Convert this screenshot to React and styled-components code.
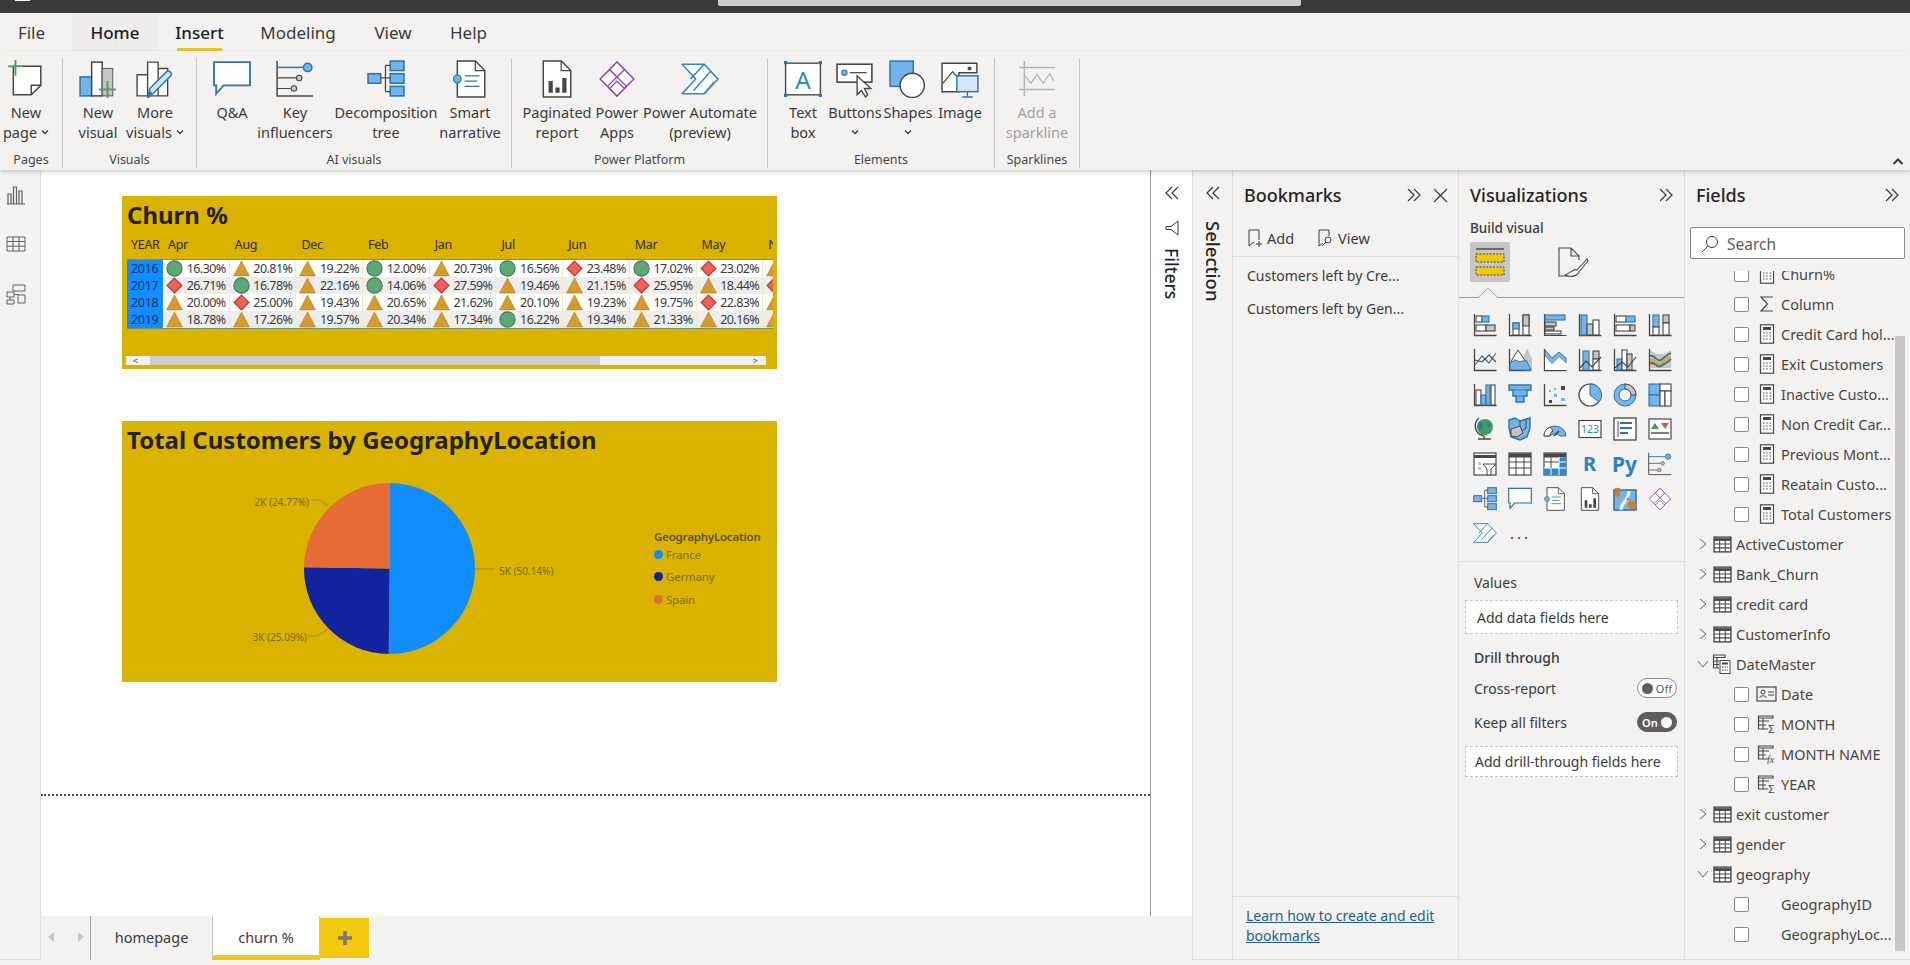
import React from 'react'
import styled, { createGlobalStyle } from 'styled-components'

const D = '#484644'
const L = '#2e75a8'
const F = '#74b4ea'
const G = '#c8c6c4'
const P = '#8e44a8'
const UI = '"Noto Sans", "Open Sans", sans-serif'

const Global = createGlobalStyle`
  html, body { margin: 0; padding: 0; background: #f3f2f1; overflow: hidden; }
  body { font-family: ${UI}; color: #252423; }
  * { box-sizing: border-box; }
`

const Shell = styled.div`
  width: 1910px;
  height: 965px;
  display: flex;
  flex-direction: column;
  overflow: hidden;
`
const TitleBar = styled.div`
  height: 13px;
  flex: none;
  background: #3b3a39;
  display: flex;
  align-items: flex-start;
`
const AppMark = styled.div`
  width: 15px;
  height: 1px;
  margin-left: 15px;
  background: #fff;
`
const TitleSearch = styled.div`
  width: 583px;
  height: 6px;
  margin-left: 688px;
  background: #cfcdcb;
  border-radius: 0 0 2px 2px;
`
const TabStrip = styled.div`
  height: 38px;
  flex: none;
  display: flex;
  background: #f3f2f1;
  font-size: 17px;
`
const MenuTab = styled.div`
  margin-left: ${(p) => p.$left}px;
  width: ${(p) => p.$width}px;
  height: 38px;
  display: flex;
  justify-content: center;
  padding-top: 8px;
  position: relative;
  line-height: 24px;
  color: ${(p) => (p.$strong ? '#201f1e' : '#3b3a39')};
  background: ${(p) => (p.$hl ? '#eeedeb' : 'transparent')};
  font-weight: ${(p) => (p.$strong ? 500 : 400)};
  &::after {
    content: '';
    display: ${(p) => (p.$line ? 'block' : 'none')};
    position: absolute;
    left: 0;
    right: 0;
    bottom: 0;
    height: 3px;
    background: #e9c229;
  }
`
const Ribbon = styled.div`
  height: 119px;
  flex: none;
  display: flex;
  padding-top: 7px;
  background: #f3f2f1;
  box-shadow: 0 2px 4px rgba(0, 0, 0, 0.18);
  position: relative;
  z-index: 3;
`
const Group = styled.div`
  width: ${(p) => p.$width}px;
  height: 110px;
  flex: none;
  border-right: 1px solid ${G};
  display: flex;
  flex-direction: column;
  padding-left: ${(p) => p.$pad || 0}px;
`
const GroupItems = styled.div`
  display: flex;
  height: 97px;
  padding-top: 2px;
`
const GroupLabel = styled.div`
  margin-left: ${(p) => -(p.$pad || 0)}px;
  text-align: center;
  font-size: 12.5px;
  line-height: 16px;
  color: #484644;
`
const Item = styled.div`
  width: ${(p) => p.$width}px;
  flex: none;
  display: flex;
  flex-direction: column;
  align-items: center;
  color: ${(p) => (p.$off ? '#a19f9d' : '#3b3a39')};
  font-size: 14.5px;
  line-height: 20px;
  text-align: center;
  white-space: nowrap;
`
const ItemIcon = styled.div`
  height: 38px;
  margin-bottom: 4px;
  display: flex;
  align-items: center;
`
const ItemLine = styled.div`
  display: flex;
  align-items: center;
  justify-content: center;
  gap: 4px;
  height: 20px;
`
const Collapse = styled.div`
  position: absolute;
  right: 6px;
  bottom: 2px;
`
const Main = styled.div`
  flex: 1;
  display: flex;
  min-height: 0;
  border-bottom: 1px solid #e1dfdd;
`
const StatusStrip = styled.div`
  height: 5px;
  flex: none;
  background: #f3f2f1;
`
const Rail = styled.div`
  width: 41px;
  flex: none;
  border-right: 1px solid #e1dfdd;
  background: #f3f2f1;
  display: flex;
  flex-direction: column;
  align-items: center;
  padding: 15px 8px 0 0;
  gap: 29px;
`
const Center = styled.div`
  width: 1151px;
  flex: none;
  display: flex;
  flex-direction: column;
`
const CanvasRow = styled.div`
  height: 746px;
  flex: none;
  display: flex;
  background: #fff;
`
const Canvas = styled.div`
  width: 1110px;
  flex: none;
  border-right: 1px solid #a19f9d;
`
const ReportPage = styled.div`
  height: 626px;
  padding: 26px 0 0 81px;
  border-bottom: 2px dotted #484644;
`
const ChurnCard = styled.div`
  width: 655px;
  height: 173px;
  background: #d9b300;
  padding: 0 0 0 5px;
  overflow: hidden;
`
const CardTitle = styled.div`
  font-family: ${UI};
  font-weight: 700;
  font-size: 24px;
  line-height: 38px;
  height: 40px;
  color: #252010;
  white-space: nowrap;
`
const ChurnTitle = styled(CardTitle)`
  height: 37px;
`
const HeadRow = styled.div`
  display: flex;
  height: 22px;
  margin-bottom: 4px;
  align-items: center;
  font-size: 12.5px;
  letter-spacing: -0.3px;
  color: #33290a;
  overflow: hidden;
  width: 646px;
`
const HeadCell = styled.div`
  flex: none;
  width: ${(p) => p.$width}px;
  padding-left: ${(p) => p.$pad}px;
`
const Grid = styled.div`
  width: 646px;
  height: 70px;
  overflow: hidden;
  border-top: 1px solid #6f9470;
  border-bottom: 1px solid #6f9470;
  background: #fff;
`
const GridRow = styled.div`
  display: flex;
  height: 17px;
  background: ${(p) => (p.$alt ? '#eeeded' : '#fff')};
`
const YearCell = styled.div`
  width: 36px;
  flex: none;
  background: #118dff;
  color: #12365c;
  font-size: 12.5px;
  letter-spacing: -0.3px;
  line-height: 17px;
  padding-left: 4px;
`
const ValCell = styled.div`
  width: 66.7px;
  flex: none;
  display: flex;
  align-items: center;
  justify-content: space-between;
  padding: 0 3px 0 3px;
  border-right: 1px solid #f3e9bd;
  font-size: 12.5px;
  letter-spacing: -0.55px;
  color: #3b3a39;
`
const HBar = styled.div`
  width: 640px;
  height: 9px;
  margin: 27px 0 0 -1px;
  background: #f1f1f1;
  display: flex;
  align-items: center;
  font-size: 9px;
  line-height: 9px;
  color: #444;
`
const HArrow = styled.div`
  width: 24px;
  flex: none;
  padding-left: 7px;
`
const HThumb = styled.div`
  width: 450px;
  flex: none;
  height: 9px;
  background: #cdcdcd;
`
const HEnd = styled.div`
  margin-left: auto;
  padding-right: 8px;
`
const PieCard = styled.div`
  width: 655px;
  height: 261px;
  margin-top: 52px;
  background: #d9b300;
`
const PieTitle = styled(CardTitle)`
  padding-left: 5px;
`
const PieBody = styled.div`
  display: flex;
  height: 221px;
`
const Legend = styled.div`
  padding-top: 68px;
  font-size: 11.5px;
  letter-spacing: -0.2px;
  color: #7d6c14;
  display: flex;
  flex-direction: column;
`
const LegendTitle = styled.div`
  font-weight: 600;
  color: #5c5120;
  line-height: 16px;
  margin-bottom: -2px;
`
const LegendRow = styled.div`
  display: flex;
  align-items: center;
  gap: 3px;
  height: 22.5px;
`
const Dot = styled.span`
  width: 9px;
  height: 9px;
  border-radius: 50%;
  background: ${(p) => p.$c};
`
const SidePane = styled.div`
  width: ${(p) => p.$width}px;
  flex: none;
  display: flex;
  flex-direction: column;
  align-items: center;
  padding-top: 15px;
  background: ${(p) => (p.$white ? '#fff' : '#f3f2f1')};
  border-left: ${(p) => (p.$white ? 'none' : '1px solid #e1dfdd')};
`
const VText = styled.div`
  writing-mode: vertical-rl;
  font-size: ${(p) => p.$size}px;
  font-weight: 500;
  color: #252423;
  margin-top: ${(p) => p.$top}px;
  line-height: 22px;
`
const Funnel = styled.div`
  margin-top: 19px;
`
const SheetBar = styled.div`
  height: 44px;
  flex: none;
  display: flex;
  background: #f3f2f1;
`
const SheetNav = styled.div`
  width: 50px;
  flex: none;
  border-right: 1px solid #a19f9d;
  display: flex;
  align-items: center;
  justify-content: center;
  gap: 20px;
  padding-bottom: 2px;
`
const SheetTab = styled.div`
  width: ${(p) => p.$width}px;
  flex: none;
  height: 44px;
  display: flex;
  align-items: center;
  justify-content: center;
  font-size: 14.5px;
  padding-top: ${(p) => (p.$on ? 3 : 0)}px;
  padding-bottom: ${(p) => (p.$on ? 0 : 2)}px;
  color: #3b3a39;
  background: ${(p) => (p.$on ? '#fff' : 'transparent')};
  border-right: 1px solid #c8c6c4;
  border-bottom: ${(p) => (p.$on ? '5px solid #f2c811' : 'none')};
`
const AddSheet = styled.div`
  width: 49px;
  height: 40px;
  margin-top: 2px;
  background: #f2c811;
  display: flex;
  align-items: center;
  justify-content: center;
`
const Pane = styled.div`
  width: 226px;
  flex: none;
  border-left: 1px solid #e1dfdd;
  background: #f3f2f1;
  display: flex;
  flex-direction: column;
  position: relative;
`
const PaneHead = styled.div`
  height: 50px;
  flex: none;
  display: flex;
  align-items: center;
  padding: 0 10px 0 11px;
  font-size: 18px;
  font-weight: 500;
  color: #252423;
  gap: 11px;
`
const HeadTitle = styled.div`
  margin-right: auto;
`
const BookActions = styled.div`
  height: 37px;
  flex: none;
  display: flex;
  align-items: center;
  padding: 0 0 0 12px;
  font-size: 14.5px;
  color: #3b3a39;
  border-bottom: 1px solid #e1dfdd;
`
const BookAction = styled.div`
  display: flex;
  align-items: center;
  gap: 4px;
  margin-right: 22px;
`
const BookList = styled.div`
  flex: 1;
  padding: 2px 0 0 14px;
  font-size: 14px;
  color: #3b3a39;
`
const BookItem = styled.div`
  height: 33px;
  line-height: 33px;
`
const BookFoot = styled.div`
  height: 63px;
  flex: none;
  border-top: 1px solid #e1dfdd;
  padding: 9px 0 0 13px;
  font-size: 14px;
  line-height: 20px;
  color: #1f5d94;
  text-decoration: underline;
`
const BuildLabel = styled.div`
  margin-left: 11px;
  height: 16px;
  line-height: 16px;
  font-size: 13.5px;
  font-weight: 500;
  color: #3b3a39;
`
const BuildTabs = styled.div`
  display: flex;
  margin: 6px 0 15px 11px;
  height: 40px;
  align-items: center;
`
const ActiveTab = styled.div`
  width: 40px;
  height: 40px;
  background: #c8c6c4;
  border-radius: 2px;
  display: flex;
  align-items: center;
  justify-content: center;
`
const FormatTab = styled.div`
  margin-left: 47px;
`
const NotchLine = styled.div`
  height: 1px;
  flex: none;
  background: #a19f9d;
  position: relative;
`
const Notch = styled.svg`
  position: absolute;
  left: 19px;
  top: -9px;
`
const IconGrid = styled.div`
  display: grid;
  grid-template-columns: repeat(6, 35px);
  grid-auto-rows: 34.7px;
  place-items: center;
  padding: 10px 0 0 8px;
  height: 264px;
  flex: none;
  color: ${L};
  border-bottom: 1px solid #e1dfdd;
`
const Glyph = styled.div`
  font-weight: 700;
  font-size: ${(p) => p.$size}px;
  line-height: 24px;
  color: #2e83bd;
`
const More = styled.div`
  font-size: 15px;
  letter-spacing: 3px;
  line-height: 14px;
  color: #3b3a39;
  margin-left: 2px;
`
const Caption = styled.div`
  margin: ${(p) => p.$top}px 0 0 15px;
  height: 20px;
  line-height: 20px;
  font-size: 14px;
  font-weight: ${(p) => (p.$bold ? 500 : 400)};
  color: #3b3a39;
`
const Drop = styled.div`
  margin: ${(p) => p.$top}px 0 0 6px;
  width: 213px;
  height: ${(p) => p.$h}px;
  padding-left: ${(p) => p.$pad}px;
  background: #fff;
  border: 1px dashed #c8c6c4;
  font-size: 14px;
  display: flex;
  align-items: center;
  color: #3b3a39;
  white-space: nowrap;
`
const ToggleRow = styled.div`
  margin: ${(p) => p.$top}px 7px 0 15px;
  height: 20px;
  display: flex;
  align-items: center;
  justify-content: space-between;
  font-size: 14px;
  color: #3b3a39;
`
const Toggle = styled.div`
  width: 40px;
  height: 20px;
  border-radius: 10px;
  border: 1px solid ${(p) => (p.$on ? '#605e5c' : '#8a8886')};
  background: ${(p) => (p.$on ? '#605e5c' : '#fff')};
  color: ${(p) => (p.$on ? '#fff' : '#605e5c')};
  display: flex;
  flex-direction: ${(p) => (p.$on ? 'row' : 'row-reverse')};
  align-items: center;
  justify-content: space-between;
  padding: 0 4px;
  font-size: 11px;
  font-weight: ${(p) => (p.$on ? 600 : 400)};
`
const Knob = styled.span`
  width: 11px;
  height: 11px;
  border-radius: 50%;
  background: ${(p) => (p.$on ? '#fff' : '#605e5c')};
`
const FieldSearch = styled.div`
  margin: 7px 0 0 5px;
  width: 215px;
  height: 32px;
  flex: none;
  background: #fff;
  border: 1px solid #8a8886;
  border-radius: 2px;
  display: flex;
  align-items: center;
  gap: 8px;
  padding: 2px 0 0 10px;
  font-size: 15.5px;
  color: #605e5c;
`
const FieldScroll = styled.div`
  margin-top: 12px;
  height: 689px;
  flex: none;
  overflow: hidden;
  position: relative;
`
const FieldInner = styled.div`
  margin-top: -12px;
`
const FieldRow = styled.div`
  height: 30px;
  display: flex;
  align-items: center;
  padding-left: ${(p) => (p.$table ? 13 : 49)}px;
  font-size: 14.5px;
  color: #484644;
  white-space: nowrap;
`
const Check = styled.span`
  width: 15px;
  height: 15px;
  flex: none;
  background: #fff;
  border: 1px solid #8a8886;
  border-radius: 2px;
`
const FieldIcon = styled.span`
  width: 23px;
  margin-left: ${(p) => p.$left}px;
  flex: none;
  display: flex;
  justify-content: center;
`
const FieldName = styled.span`
  margin-left: ${(p) => p.$left}px;
`
const VBar = styled.div`
  position: absolute;
  right: 5px;
  top: 65px;
  width: 10px;
  height: 615px;
  background: #c8c6c4;
`

const Svg = ({ size = 24, box = 24, children }) => (
  <svg width={size} height={size} viewBox={`0 0 ${box} ${box}`} fill="none" style={{ display: 'block', flex: 'none' }}>
    {children}
  </svg>
)
const Rects = ({ items }) =>
  items.map(([x, y, w, h, f = '#fff', s = D], i) => (
    <rect key={i} x={x} y={y} width={w} height={h} fill={f} stroke={s} strokeWidth="1.1" />
  ))
const Axis = () => <path d="M1.5 1V22.5H23.5" stroke={D} strokeWidth="1.3" />

const Chev = ({ left, size = 16 }) => (
  <Svg size={size} box={16}>
    <path d={left ? 'M8 2L2 8l6 6M14 2L8 8l6 6' : 'M2 2l6 6-6 6M8 2l6 6-6 6'} stroke="#3b3a39" strokeWidth="1.2" />
  </Svg>
)
const Caret = () => (
  <Svg size={8} box={8}>
    <path d="M1 2.5L4 5.5L7 2.5" stroke="#3b3a39" strokeWidth="1.3" />
  </Svg>
)

// ribbon icons, drawn on a 36 box
const NewPageIcon = () => (
  <Svg size={38} box={36}>
    <path d="M6 6H32V24L23 33H6Z" fill="#fff" stroke={D} strokeWidth="1.4" />
    <path d="M32 24H23V33" stroke={D} strokeWidth="1.4" />
    <path d="M8 0V15M1 6H15" stroke="#4c9c68" strokeWidth="1.8" />
  </Svg>
)
const NewVisualIcon = () => (
  <Svg size={38} box={36}>
    <rect x="1" y="16" width="11" height="18" fill={F} stroke={L} strokeWidth="1.4" />
    <rect x="12" y="2" width="10" height="32" fill="#fff" stroke={D} strokeWidth="1.4" />
    <rect x="22" y="8" width="10" height="26" fill={G} stroke={D} strokeWidth="0.8" />
    <path d="M27 20V37M19 28H35" stroke="#4c9c68" strokeWidth="1.8" />
  </Svg>
)
const MoreVisualsIcon = () => (
  <Svg size={38} box={36}>
    <path d="M1 14H11V34H1ZM11 2H21V34H11ZM21 8H30V34H21Z" fill="#fff" stroke={D} strokeWidth="1.3" />
    <path d="M11 36L13 27L29 11C31 9 35 13 33 15L17 31Z" fill="#cfe4f6" stroke={L} strokeWidth="1.4" />
    <path d="M11 36L13 29L16 32Z" fill={L} />
  </Svg>
)
const QaIcon = ({ size = 38 }) => (
  <Svg size={size} box={36}>
    <path d="M1 2H35V24H10L3 32V24H1Z" fill="#fff" stroke={L} strokeWidth="1.8" />
  </Svg>
)
const KeyIcon = ({ size = 38 }) => (
  <Svg size={size} box={36}>
    <path d="M1 1V34H35" stroke={D} strokeWidth="1.4" />
    <path d="M1 7H26" stroke={L} strokeWidth="1.4" />
    <circle cx="30" cy="7" r="4" fill={F} stroke={L} strokeWidth="1.4" />
    <path d="M1 17H19M1 27H14" stroke={D} strokeWidth="1.1" />
    <circle cx="22" cy="17" r="2.6" fill={G} stroke={D} />
    <circle cx="17" cy="27" r="2.6" fill={G} stroke={D} />
  </Svg>
)
const DecompIcon = ({ size = 38 }) => (
  <Svg size={size} box={36}>
    <rect x="1" y="13" width="12" height="9" fill={F} stroke={L} strokeWidth="1.5" />
    <rect x="22" y="1" width="13" height="9" fill={F} stroke={L} strokeWidth="1.5" />
    <rect x="22" y="13" width="13" height="9" fill={F} stroke={L} strokeWidth="1.5" />
    <rect x="22" y="25" width="13" height="9" fill={F} stroke={L} strokeWidth="1.5" />
    <path d="M13 17H22M17.5 5V30M17.5 5H22M17.5 30H22" stroke={D} strokeWidth="1.2" />
  </Svg>
)
const NarrativeIcon = ({ size = 38 }) => (
  <Svg size={size} box={36}>
    <path d="M6 1H23L32 10V35H6Z" fill="#fff" stroke={D} strokeWidth="1.4" />
    <path d="M23 1V10H32" stroke={D} strokeWidth="1.2" />
    <circle cx="6" cy="18" r="3.6" fill={F} stroke={L} strokeWidth="1.2" />
    <path d="M13 15H27M13 20H25M13 25H27" stroke={L} strokeWidth="1.2" />
  </Svg>
)
const PaginatedIcon = ({ size = 38 }) => (
  <Svg size={size} box={36}>
    <path d="M5 1H22L31 10V35H5Z" fill="#fff" stroke={D} strokeWidth="1.4" />
    <path d="M22 1V10H31" stroke={D} strokeWidth="1.2" />
    <path d="M10 20H14V31H10ZM16.5 26H20.5V31H16.5ZM23 17H27V31H23Z" fill={D} />
  </Svg>
)
const AppsIcon = ({ size = 38 }) => (
  <Svg size={size} box={36}>
    <path d="M18 2L34 18 18 34 2 18Z" fill="#fff" stroke={P} strokeWidth="1.4" strokeLinejoin="round" />
    <path d="M11 9L27 25M25 9L9 25" stroke={P} strokeWidth="1.3" />
    <path d="M18 2L25 9 18 16 11 9ZM18 20L25 27 18 34 11 27Z" stroke={P} strokeWidth="1.3" fill="#fff" />
  </Svg>
)
const AutomateIcon = ({ size = 38 }) => (
  <Svg size={size} box={36}>
    <path d="M1 4H22L35 18 22 32H1L14 18Z" fill="#fff" stroke="#2f88c8" strokeWidth="1.5" strokeLinejoin="round" />
    <path d="M22 4L9 18M28 11L12 29M31 21L22 32" stroke="#2f88c8" strokeWidth="1.4" />
  </Svg>
)
const TextBoxIcon = () => (
  <Svg size={38} box={36}>
    <rect x="1.5" y="3" width="33" height="30" fill="#fff" stroke={D} strokeWidth="1.3" />
    <path d="M0 1h3v3H0zM33 1h3v3h-3zM0 32h3v3H0zM33 32h3v3h-3z" fill={L} />
    <text x="18" y="27" textAnchor="middle" fontSize="23" fontFamily={UI} fill="#2f88c8">A</text>
  </Svg>
)
const ButtonsIcon = () => (
  <Svg size={38} box={36}>
    <rect x="1" y="4" width="33" height="17" fill="#fff" stroke={D} strokeWidth="1.5" />
    <circle cx="8" cy="12" r="2.5" fill={F} stroke={L} />
    <path d="M13 12H29" stroke={D} strokeWidth="1.2" />
    <path d="M20 15V33L24 29L28 35L30 33L27 27L33 27Z" fill="#fff" stroke={D} strokeWidth="1.3" />
  </Svg>
)
const ShapesIcon = () => (
  <Svg size={38} box={36}>
    <rect x="1" y="1" width="22" height="24" fill={F} stroke={L} strokeWidth="1.4" />
    <circle cx="22" cy="24" r="11.5" fill="#fff" stroke={D} strokeWidth="1.4" />
  </Svg>
)
const ImageIcon = () => (
  <Svg size={38} box={36}>
    <path d="M1 3H34V12H17V30H1Z" fill="#fff" stroke={D} strokeWidth="1.4" />
    <path d="M2 22L11 11L18 19" stroke={D} strokeWidth="1.2" />
    <circle cx="27" cy="8" r="1.8" fill={D} />
    <rect x="15" y="15" width="20" height="15" fill="#d6e8f7" stroke={L} strokeWidth="1.4" />
    <path d="M25 30V35M20 35H30" stroke={L} strokeWidth="1.3" />
  </Svg>
)
const SparklineIcon = () => (
  <Svg size={38} box={36}>
    <path d="M6 1V34M1 7H35M1 28H35" stroke="#b5b3b1" strokeWidth="1.4" />
    <path d="M6 14L12 22L18 14L24 22L30 13L34 20" stroke="#b5b3b1" strokeWidth="1.1" />
  </Svg>
)

const CalcIcon = () => (
  <Svg size={20} box={20}>
    <rect x="3.5" y="0.8" width="13" height="18.4" fill="#fff" stroke={D} strokeWidth="1.2" />
    <rect x="6" y="3" width="8" height="3" fill={D} />
    <path d="M6 9h1.5M9.2 9h1.5M12.5 9H14M6 12h1.5M9.2 12h1.5M12.5 12H14M6 15h1.5M9.2 15h1.5M12.5 15H14" stroke={D} />
  </Svg>
)
const TableIcon = () => (
  <Svg size={19} box={18}>
    <rect x="1" y="2" width="16" height="14" fill="#fff" stroke={D} strokeWidth="1.3" />
    <path d="M1 3h16v2.6H1z" fill={D} />
    <path d="M1 8.5h16M1 12.2h16M6.3 5v11M11.6 5v11" stroke={D} />
  </Svg>
)
const ColCalc = ({ fx }) => (
  <Svg size={20} box={20}>
    <path d="M1.5 2H16V4H1.5ZM1.5 2V15H11" stroke={D} strokeWidth="1.2" />
    <path d="M1.5 7H12M1.5 11H9M6 4V15" stroke={D} />
    {fx ? (
      <text x="10" y="19" fontSize="10" fontStyle="italic" fontFamily="Liberation Serif, serif" fill={D}>fx</text>
    ) : (
      <text x="11" y="19" fontSize="11" fontFamily="Liberation Sans, sans-serif" fill={D}>Σ</text>
    )}
  </Svg>
)
const fieldIcons = {
  calc: <CalcIcon />,
  sum: (
    <Svg size={20} box={20}>
      <path d="M16 3H4L10.5 10L4 17H16" stroke={D} strokeWidth="1.2" />
    </Svg>
  ),
  name: (
    <Svg size={22} box={22}>
      <rect x="1" y="4" width="19" height="14" stroke={D} strokeWidth="1.2" />
      <circle cx="7" cy="9" r="2" stroke={D} />
      <path d="M3.5 15c1-3 6-3 7 0M12 9h6M12 12h6" stroke={D} />
    </Svg>
  ),
  colsum: <ColCalc />,
  colfx: <ColCalc fx />,
  mixed: (
    <Svg size={21} box={21}>
      <path d="M1.5 1H13V3.5H1.5ZM1.5 1V14H7M1.5 7H7M1.5 10.5H7M5 3.5V14" stroke={D} strokeWidth="1.1" />
      <rect x="8" y="6.5" width="10" height="13" fill="#fff" stroke={D} />
      <rect x="10" y="8.5" width="6" height="2" fill={D} />
      <path d="M10 13h1.5M12.5 13H14M15 13h1M10 16h1.5M12.5 16H14M15 16h1" stroke={D} />
    </Svg>
  ),
}

const fields = [
  ['f', 'calc', 'Churn%'],
  ['f', 'sum', 'Column'],
  ['f', 'calc', 'Credit Card hol...'],
  ['f', 'calc', 'Exit Customers'],
  ['f', 'calc', 'Inactive Custo...'],
  ['f', 'calc', 'Non Credit Car...'],
  ['f', 'calc', 'Previous Mont...'],
  ['f', 'calc', 'Reatain Custo...'],
  ['f', 'calc', 'Total Customers'],
  ['t', 'closed', 'ActiveCustomer'],
  ['t', 'closed', 'Bank_Churn'],
  ['t', 'closed', 'credit card'],
  ['t', 'closed', 'CustomerInfo'],
  ['t', 'mixed', 'DateMaster'],
  ['f', 'name', 'Date'],
  ['f', 'colsum', 'MONTH'],
  ['f', 'colfx', 'MONTH NAME'],
  ['f', 'colsum', 'YEAR'],
  ['t', 'closed', 'exit customer'],
  ['t', 'closed', 'gender'],
  ['t', 'open', 'geography'],
  ['f', null, 'GeographyID'],
  ['f', null, 'GeographyLoc...'],
]

const vizIcons = [
  <Svg><Axis /><Rects items={[[3, 3, 6, 6], [9, 3, 7, 6, F, L], [3, 12, 10, 6], [13, 12, 9, 6, G]]} /></Svg>,
  <Svg><Axis /><Rects items={[[5, 10, 6, 12], [5, 10, 6, 6, F, L], [15, 2, 6, 20], [15, 2, 6, 11, G]]} /></Svg>,
  <Svg><path d="M1.5 1V22.5H23.5" stroke={D} strokeWidth="1.1" /><Rects items={[[2, 2, 20, 5, F, L], [2, 9, 11, 4, G], [2, 14, 9, 3, G], [2, 18, 16, 3]]} /></Svg>,
  <Svg><Axis /><Rects items={[[3, 2, 6, 20, F, L], [9, 11, 6, 11, G], [15, 7, 6, 15]]} /></Svg>,
  <Svg><Axis /><Rects items={[[3, 3, 10, 6], [13, 3, 9, 6, F, L], [3, 12, 14, 6], [17, 12, 5, 6, G]]} /></Svg>,
  <Svg><Axis /><Rects items={[[5, 2, 6, 12, F, L], [5, 14, 6, 8], [15, 2, 6, 8, G], [15, 10, 6, 12]]} /></Svg>,
  <Svg><Axis /><path d="M2 17L9 8L16 15L23 5" stroke={L} strokeWidth="1.2" /><path d="M2 12L9 14L16 7L23 14" stroke={D} strokeWidth="1.1" /></Svg>,
  <Svg><Axis /><path d="M15 12L19 1L24 12V22H15Z" fill={G} stroke={G} /><path d="M2 22V15L10 2L18 14L23 22Z" fill="#fff" stroke={D} /><path d="M2 22V15L7 12L12 14L18 12L23 22Z" fill={F} stroke={L} /></Svg>,
  <Svg><Axis /><path d="M2 2L9 10L16 4L23 10V15L16 9L9 16L2 8Z" fill={F} stroke={L} /><path d="M2 8L9 16L16 9L23 15V22H2Z" fill="#fff" /></Svg>,
  <Svg><Axis /><Rects items={[[5, 3, 6, 19, F, L], [15, 3, 6, 8, G], [15, 11, 6, 11]]} /><path d="M2 20L8 13L14 19L23 9" stroke={D} strokeWidth="1.2" /></Svg>,
  <Svg><Axis /><Rects items={[[4, 11, 5, 11, F, L], [9, 2, 5, 20], [14, 6, 5, 16, G]]} /><path d="M2 20L9 14L15 19L23 9" stroke={D} strokeWidth="1.2" /></Svg>,
  <Svg><Axis /><path d="M2 2L8 6H16L23 2V20H2Z" fill={G} /><path d="M2 12C7 6 9 18 13 14C17 10 20 10 23 7V12C19 14 17 19 12 19C8 19 6 15 2 18Z" fill="#e0a63a" /><path d="M2 8C7 6 9 15 13 12C17 9 20 6 23 5" stroke={L} strokeWidth="1.8" /><path d="M2 15C7 13 9 21 13 18C17 15 20 15 23 11" stroke={L} strokeWidth="1.8" /></Svg>,
  <Svg><Axis /><Rects items={[[3, 7, 5, 15], [8, 12, 5, 10, F, L], [13, 2, 4, 20, F, L], [18, 2, 4, 20]]} /></Svg>,
  <Svg><path d="M1 2H23V7H19V13H16V19H8V13H5V7H1Z" fill={F} stroke={L} strokeWidth="1.4" /><path d="M5 7H19M8 13H16" stroke={L} /></Svg>,
  <Svg><Axis /><path d="M6 17h3v3H6zM18 3h4v4h-4z" fill={D} /><path d="M6 7h2v2H6zM11 11h3v3h-3zM18 15h4v3h-4zM11 5h2v2h-2z" fill={F} /></Svg>,
  <Svg><circle cx="12" cy="12" r="11" fill="#fff" stroke={D} strokeWidth="1.2" /><path d="M12 1A11 11 0 0 1 21 19L12 12Z" fill={F} stroke={L} /></Svg>,
  <Svg><circle cx="12" cy="12" r="8.5" stroke={F} strokeWidth="5" /><circle cx="12" cy="12" r="11" stroke={L} strokeWidth="1" /><circle cx="12" cy="12" r="6" stroke={L} strokeWidth="1" /><path d="M12 1A11 11 0 0 1 23 12H18A6 6 0 0 0 12 6Z" fill={G} stroke={D} /></Svg>,
  <Svg><Rects items={[[1, 1, 11, 11, F, L], [1, 12, 11, 11, F, L], [12, 1, 11, 7, '#fff', D], [12, 8, 5, 15, '#fff', D], [17, 8, 6, 15, '#fff', D]]} /></Svg>,
  <Svg><circle cx="12" cy="10" r="8" fill="#3f9b5f" /><path d="M5 6C8 4 11 7 9 11C7 15 5 12 5 6ZM14 5L18 8L15 11Z" fill="#2e75a8" /><path d="M6 1C0 6 1 17 11 19M5 22H18M11 19V22" stroke={D} strokeWidth="1.4" /></Svg>,
  <Svg><path d="M1 3L7 1L12 4L22 1V11L19 20L12 23L3 20L1 11Z" fill={F} stroke={L} strokeWidth="1.4" /><path d="M3 12L12 9L15 16L9 20L3 19Z" fill={G} stroke={D} /><path d="M12 3V9M18 2V11L14 14" stroke={D} /></Svg>,
  <Svg><path d="M1 19A11 10 0 0 1 23 19H17A6 5 0 0 0 7 19Z" fill={F} stroke={L} /><path d="M1 19A11 10 0 0 1 7 10L10 14A6 5 0 0 0 7 19Z" fill="#fff" stroke={D} /><path d="M11 19L16 14" stroke={D} strokeWidth="1.6" /></Svg>,
  <Svg><rect x="1" y="3.5" width="22" height="17" fill="#fff" stroke={D} strokeWidth="1.2" /><text x="12" y="16" textAnchor="middle" fontSize="10.5" fontFamily={UI} fill="#2f88c8">123</text></Svg>,
  <Svg><rect x="1" y="1" width="22" height="22" fill="#fff" stroke={D} strokeWidth="1.3" /><path d="M5 4V20" stroke={D} /><path d="M7 6H19M7 11H19M7 16H15" stroke={L} strokeWidth="2" /></Svg>,
  <Svg><rect x="1" y="2" width="22" height="20" fill="#fff" stroke={D} strokeWidth="1.2" /><path d="M3 12L7 6L11 12Z" fill="#3f9b5f" /><path d="M13 6H21L17 12Z" fill="#e0504a" /><path d="M3 16H21" stroke={D} strokeWidth="1.4" /></Svg>,
  <Svg><rect x="1" y="1" width="22" height="22" fill="#fff" stroke={D} strokeWidth="1.2" /><path d="M1 4.5H23" stroke={D} strokeWidth="3" /><path d="M5 10h3v3H5zM5 15h3v3H5z" fill={G} /><path d="M10 12H23L18 17V23H14V17Z" fill="#fff" stroke={D} /></Svg>,
  <Svg><rect x="1" y="1" width="22" height="22" fill="#fff" stroke={D} strokeWidth="1.2" /><path d="M1 3.5H23" stroke={D} strokeWidth="4" /><path d="M1 10H23M1 16H23M8 5V23M16 5V23" stroke={D} /></Svg>,
  <Svg><rect x="1" y="1" width="22" height="22" fill="#fff" stroke={D} strokeWidth="1.2" /><path d="M1 3.5H23" stroke={D} strokeWidth="4" /><path d="M16 6H23V23H16ZM1 16H23V23H1Z" fill="#2f88c8" /><path d="M1 10H23M1 16H23M8 5V23M16 5V23" stroke="#fff" /><path d="M1 10H16M8 5V16" stroke={D} /></Svg>,
  <Glyph $size={20}>R</Glyph>,
  <Glyph $size={21}>Py</Glyph>,
  <KeyIcon size={24} />,
  <DecompIcon size={24} />,
  <QaIcon size={24} />,
  <NarrativeIcon size={24} />,
  <PaginatedIcon size={24} />,
  <Svg><rect x="1" y="3" width="22" height="20" fill={F} stroke={L} strokeWidth="1.6" /><path d="M8 23C8 14 15 16 16 4" stroke="#fff" strokeWidth="3" /><path d="M2 1H7V8L4.5 11L2 8Z" fill="#d97a23" /><circle cx="19" cy="18" r="4" fill="#d97a23" /><circle cx="15" cy="12" r="1.5" fill="#d97a23" /></Svg>,
  <AppsIcon size={24} />,
  <AutomateIcon size={24} />,
  <More>...</More>,
]

const cols = ['Apr', 'Aug', 'Dec', 'Feb', 'Jan', 'Jul', 'Jun', 'Mar', 'May', 'N']
const rows = [
  ['2016', ['c16.30', 't20.81', 't19.22', 'c12.00', 't20.73', 'c16.56', 'd23.48', 'c17.02', 'd23.02', 't']],
  ['2017', ['d26.71', 'c16.78', 't22.16', 'c14.06', 'd27.59', 't19.46', 't21.15', 'd25.95', 't18.44', 'd']],
  ['2018', ['t20.00', 'd25.00', 't19.43', 't20.65', 't21.62', 't20.10', 't19.23', 't19.75', 'd22.83', 't']],
  ['2019', ['t18.78', 't17.26', 't19.57', 't20.34', 't17.34', 'c16.22', 't19.34', 't21.33', 't20.16', 't']],
]

const Kpi = ({ kind }) => (
  <Svg size={17} box={16}>
    {kind === 'c' && <circle cx="8" cy="8" r="7.2" fill="#5fa777" stroke="#3c7a55" />}
    {kind === 't' && <path d="M8 1L15.5 15H0.5Z" fill="#d69a2d" stroke="#b57f1f" strokeWidth="0.6" />}
    {kind === 'd' && <path d="M8 1L15 8L8 15L1 8Z" fill="#f0605a" stroke="#b8362f" />}
  </Svg>
)

const slices = [
  { share: 50.14, color: '#118dff' },
  { share: 25.09, color: '#12239e' },
  { share: 24.77, color: '#e66c37' },
]
const cx = 267.5
const cy = 107.5
const r = 85.5
const pt = (a) => `${cx + r * Math.sin(a)} ${cy - r * Math.cos(a)}`

const PieChart = () => {
  let acc = 0
  return (
    <svg width="532" height="221" style={{ display: 'block', flex: 'none' }}>
      {slices.map((s) => {
        const from = acc
        acc += (s.share / 100) * Math.PI * 2
        return <path key={s.color} d={`M${cx} ${cy}L${pt(from)}A${r} ${r} 0 ${s.share > 50 ? 1 : 0} 1 ${pt(acc)}Z`} fill={s.color} />
      })}
      <g stroke="#a58c12" fill="none">
        <path d="M353 108H373" />
        <path d="M205 169L195 175H187" />
        <path d="M206 45L198 39H190" />
      </g>
      <g fontSize="10" fontFamily={UI} fill="#7a6a10">
        <text x="377" y="114">5K (50.14%)</text>
        <text x="185" y="180" textAnchor="end">3K (25.09%)</text>
        <text x="187" y="45" textAnchor="end">2K (24.77%)</text>
      </g>
    </svg>
  )
}

const ribbon = [
  { label: 'Pages', width: 63, items: [{ w: 52, icon: <NewPageIcon />, text: ['New', 'page'], caret: 'inline' }] },
  { label: 'Visuals', width: 134, pad: 7, items: [{ w: 56, icon: <NewVisualIcon />, text: ['New', 'visual'] }, { w: 58, icon: <MoreVisualsIcon />, text: ['More', 'visuals'], caret: 'inline' }] },
  { label: 'AI visuals', width: 315, pad: 5, items: [{ w: 60, icon: <QaIcon />, text: ['Q&A'] }, { w: 66, icon: <KeyIcon />, text: ['Key', 'influencers'] }, { w: 116, icon: <DecompIcon />, text: ['Decomposition', 'tree'] }, { w: 52, icon: <NarrativeIcon />, text: ['Smart', 'narrative'] }] },
  { label: 'Power Platform', width: 256, pad: 7, items: [{ w: 76, icon: <PaginatedIcon />, text: ['Paginated', 'report'] }, { w: 44, icon: <AppsIcon />, text: ['Power', 'Apps'] }, { w: 122, icon: <AutomateIcon />, text: ['Power Automate', '(preview)'] }] },
  { label: 'Elements', width: 227, pad: 12, items: [{ w: 46, icon: <TextBoxIcon />, text: ['Text', 'box'] }, { w: 58, icon: <ButtonsIcon />, text: ['Buttons'], caret: 'below' }, { w: 48, icon: <ShapesIcon />, text: ['Shapes'], caret: 'below' }, { w: 56, icon: <ImageIcon />, text: ['Image'] }] },
  { label: 'Sparklines', width: 85, items: [{ w: 84, off: true, icon: <SparklineIcon />, text: ['Add a', 'sparkline'] }] },
]

const menu = [
  { t: 'File', left: 18, width: 27 },
  { t: 'Home', left: 27, width: 86, hl: true, strong: true },
  { t: 'Insert', left: 19, width: 45, strong: true, line: true },
  { t: 'Modeling', left: 39, width: 74 },
  { t: 'View', left: 40, width: 36 },
  { t: 'Help', left: 40, width: 35 },
]

export default function App() {
  return (
    <Shell>
      <Global />
      <TitleBar>
        <AppMark />
        <TitleSearch />
      </TitleBar>
      <TabStrip>
        {menu.map((m) => (
          <MenuTab key={m.t} $left={m.left} $width={m.width} $hl={m.hl} $strong={m.strong} $line={m.line}>
            {m.t}
          </MenuTab>
        ))}
      </TabStrip>
      <Ribbon>
        {ribbon.map((g) => (
          <Group key={g.label} $width={g.width} $pad={g.pad}>
            <GroupItems>
              {g.items.map((it) => (
                <Item key={it.text.join()} $width={it.w} $off={it.off}>
                  <ItemIcon>{it.icon}</ItemIcon>
                  {it.text.map((t, i) => (
                    <ItemLine key={t}>
                      {t}
                      {it.caret === 'inline' && i === it.text.length - 1 && <Caret />}
                    </ItemLine>
                  ))}
                  {it.caret === 'below' && (
                    <ItemLine>
                      <Caret />
                    </ItemLine>
                  )}
                </Item>
              ))}
            </GroupItems>
            <GroupLabel $pad={g.pad}>{g.label}</GroupLabel>
          </Group>
        ))}
        <Collapse>
          <Svg size={12} box={12}>
            <path d="M1.5 8L6 3.5L10.5 8" stroke="#3b3a39" strokeWidth="2" />
          </Svg>
        </Collapse>
      </Ribbon>
      <Main>
        <Rail>
          <Svg size={20} box={20}>
            <path d="M2 19V9H5V19ZM7.5 19V2H10.5V19ZM13 19V6H16V19ZM1 19H19" stroke="#605e5c" strokeWidth="1.2" />
          </Svg>
          <Svg size={20} box={20}>
            <path d="M1 3H19V17H1ZM1 7.5H19M1 12.2H19M7 3V17M13 3V17" stroke="#605e5c" />
          </Svg>
          <Svg size={22} box={22}>
            <path d="M8 2H20V8H8ZM2 9H9V14H2ZM2 17H9V21H2ZM13 12H20V20H13ZM9 11.5H13M5 14V17" stroke="#605e5c" />
          </Svg>
        </Rail>
        <Center>
          <CanvasRow>
            <Canvas>
              <ReportPage>
                <ChurnCard>
                  <ChurnTitle>Churn %</ChurnTitle>
                  <HeadRow>
                    <HeadCell $width={36} $pad={4}>YEAR</HeadCell>
                    {cols.map((c) => (
                      <HeadCell key={c} $width={66.7} $pad={5}>{c}</HeadCell>
                    ))}
                  </HeadRow>
                  <Grid>
                    {rows.map(([year, vals], i) => (
                      <GridRow key={year} $alt={i % 2 === 1}>
                        <YearCell>{year}</YearCell>
                        {vals.map((v, j) => (
                          <ValCell key={j}>
                            <Kpi kind={v[0]} />
                            {v.length > 1 && `${v.slice(1)}%`}
                          </ValCell>
                        ))}
                      </GridRow>
                    ))}
                  </Grid>
                  <HBar>
                    <HArrow>&lt;</HArrow>
                    <HThumb />
                    <HEnd>&gt;</HEnd>
                  </HBar>
                </ChurnCard>
                <PieCard>
                  <PieTitle>Total Customers by GeographyLocation</PieTitle>
                  <PieBody>
                    <PieChart />
                    <Legend>
                      <LegendTitle>GeographyLocation</LegendTitle>
                      <LegendRow><Dot $c="#118dff" />France</LegendRow>
                      <LegendRow><Dot $c="#12239e" />Germany</LegendRow>
                      <LegendRow><Dot $c="#e66c37" />Spain</LegendRow>
                    </Legend>
                  </PieBody>
                </PieCard>
              </ReportPage>
            </Canvas>
            <SidePane $white $width={41}>
              <Chev left />
              <Funnel>
                <Svg size={16} box={16}>
                  <path d="M14 1V15L7 9.5H2V6.5H7Z" stroke="#3b3a39" />
                </Svg>
              </Funnel>
              <VText $top={12} $size={17.5}>Filters</VText>
            </SidePane>
          </CanvasRow>
          <SheetBar>
            <SheetNav>
              <Svg size={10} box={10}><path d="M8 0V10L2 5Z" fill="#c8c6c4" /></Svg>
              <Svg size={10} box={10}><path d="M2 0V10L8 5Z" fill="#c8c6c4" /></Svg>
            </SheetNav>
            <SheetTab $width={122}>homepage</SheetTab>
            <SheetTab $width={107} $on>churn %</SheetTab>
            <AddSheet>
              <Svg size={16} box={16}>
                <path d="M8 1V15M1 8H15" stroke="#7a7574" strokeWidth="3.6" />
              </Svg>
            </AddSheet>
          </SheetBar>
        </Center>
        <SidePane $width={40}>
          <Chev left />
          <VText $top={20} $size={18.5}>Selection</VText>
        </SidePane>
        <Pane>
          <PaneHead>
            <HeadTitle>Bookmarks</HeadTitle>
            <Chev />
            <Svg size={15} box={15}>
              <path d="M1 1L14 14M14 1L1 14" stroke="#3b3a39" strokeWidth="1.2" />
            </Svg>
          </PaneHead>
          <BookActions>
            <BookAction>
              <Svg size={18} box={18}>
                <path d="M4 17V1H14V11M4 17L9 13M11 15H17M14 12V18" stroke="#3b3a39" />
              </Svg>
              Add
            </BookAction>
            <BookAction>
              <Svg size={18} box={18}>
                <path d="M3 17V1H13V7M3 17L7 14" stroke="#3b3a39" />
                <circle cx="12" cy="11" r="3" stroke="#3b3a39" />
                <path d="M10 13L6 17" stroke="#3b3a39" />
              </Svg>
              View
            </BookAction>
          </BookActions>
          <BookList>
            <BookItem>Customers left by Cre...</BookItem>
            <BookItem>Customers left by Gen...</BookItem>
          </BookList>
          <BookFoot>
            Learn how to create and edit
            <br />
            bookmarks
          </BookFoot>
        </Pane>
        <Pane>
          <PaneHead>
            <HeadTitle>Visualizations</HeadTitle>
            <Chev />
          </PaneHead>
          <BuildLabel>Build visual</BuildLabel>
          <BuildTabs>
            <ActiveTab>
              <Svg size={30} box={30}>
                <path d="M1 2H29" stroke={D} strokeWidth="1.4" />
                <rect x="1" y="7" width="28" height="8" fill="#f2c811" stroke={D} strokeDasharray="2 1.4" />
                <rect x="1" y="20" width="28" height="8" fill="#f2c811" stroke={D} strokeDasharray="2 1.4" />
              </Svg>
            </ActiveTab>
            <FormatTab>
              <Svg size={32} box={32}>
                <path d="M17 30H2V2H14L22 10V14M14 2V10H22" stroke={D} strokeWidth="1.1" />
                <path d="M30 13L20 24C17 22 14 27 8 29C13 31 20 31 22 26L31 15Z" fill="#fff" stroke={D} strokeWidth="1.1" />
              </Svg>
            </FormatTab>
          </BuildTabs>
          <NotchLine>
            <Notch width="20" height="10" viewBox="0 0 20 10">
              <path d="M0 10L10 1L20 10Z" fill="#f3f2f1" />
              <path d="M0 9.5L10 0.5L20 9.5" stroke="#a19f9d" fill="none" />
            </Notch>
          </NotchLine>
          <IconGrid>
            {vizIcons.map((ic, i) => (
              <React.Fragment key={i}>{ic}</React.Fragment>
            ))}
          </IconGrid>
          <Caption $top={11}>Values</Caption>
          <Drop $top={7} $h={34} $pad={11}>Add data fields here</Drop>
          <Caption $top={14} $bold>Drill through</Caption>
          <ToggleRow $top={10}>
            Cross-report
            <Toggle>Off<Knob /></Toggle>
          </ToggleRow>
          <ToggleRow $top={14}>
            Keep all filters
            <Toggle $on>On<Knob $on /></Toggle>
          </ToggleRow>
          <Drop $top={14} $h={31} $pad={9}>Add drill-through fields here</Drop>
        </Pane>
        <Pane>
          <PaneHead>
            <HeadTitle>Fields</HeadTitle>
            <Chev />
          </PaneHead>
          <FieldSearch>
            <Svg size={18} box={18}>
              <circle cx="11" cy="7" r="5.5" stroke="#3b3a39" />
              <path d="M7 11L1 17" stroke="#3b3a39" />
            </Svg>
            Search
          </FieldSearch>
          <FieldScroll>
            <FieldInner>
              {fields.map(([kind, icon, name]) =>
                kind === 'f' ? (
                  <FieldRow key={name}>
                    <Check />
                    <FieldIcon $left={6}>{icon && fieldIcons[icon]}</FieldIcon>
                    <FieldName $left={3}>{name}</FieldName>
                  </FieldRow>
                ) : (
                  <FieldRow key={name} $table>
                    <Svg size={10} box={10}>
                      <path d={icon === 'closed' ? 'M2 0L8 5L2 10' : 'M0 2L5 8L10 2'} stroke="#605e5c" />
                    </Svg>
                    <FieldIcon $left={3}>{icon === 'mixed' ? fieldIcons.mixed : <TableIcon />}</FieldIcon>
                    <FieldName $left={2}>{name}</FieldName>
                  </FieldRow>
                )
              )}
            </FieldInner>
            <VBar />
          </FieldScroll>
        </Pane>
      </Main>
      <StatusStrip />
    </Shell>
  )
}
